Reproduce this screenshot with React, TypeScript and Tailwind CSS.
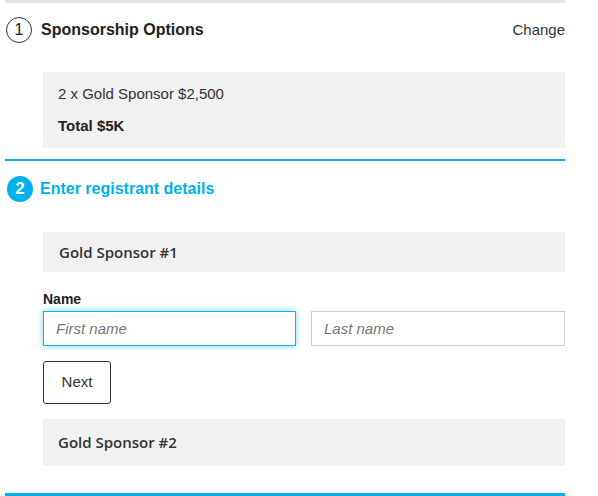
export default function App() {
  const sans = { fontFamily: '"Liberation Sans", Arial, sans-serif' };
  const open = { fontFamily: '"Open Sans", "Noto Sans", sans-serif' };

  return (
    <div className="min-h-screen bg-white text-[#333]" style={sans}>
      <div className="ml-[5px] w-[560px]">
        {/* Step 1 */}
        <section className="border-t-[3px] border-[#e4e4e4]">
          <div className="flex h-[54px] items-center justify-between">
            <div className="flex items-center gap-[9px]">
              <span className="ml-px flex h-[26px] w-[26px] items-center justify-center rounded-full border border-[#333] text-[16px] text-[#222]">
                1
              </span>
              <h2 className="text-[16px] font-bold text-[#222]">Sponsorship Options</h2>
            </div>
            <button className="text-[15px] text-[#333]">Change</button>
          </div>
          <div className="ml-[38px] mt-[15px] flex h-[76px] flex-col justify-center gap-[10px] bg-[#f1f1f1] px-[15px] text-[15px]">
            <p className="text-[#333]">2 x Gold Sponsor $2,500</p>
            <p className="font-bold text-[#222]">Total $5K</p>
          </div>
        </section>

        {/* Step 2 */}
        <section className="mt-[11px] border-t-2 border-[#00b1eb]">
          <div className="flex h-[56px] items-center gap-[7px]">
            <span className="ml-[2px] flex h-[26px] w-[26px] items-center justify-center rounded-full bg-[#00b1eb] text-[17px] font-bold text-white">
              2
            </span>
            <h2 className="text-[16px] font-bold text-[#00b1eb]">Enter registrant details</h2>
          </div>

          <div className="ml-[38px]">
            <div
              className="mt-[15px] flex h-[40px] items-center bg-[#f1f1f1] px-[16px] text-[15px] font-semibold text-[#333]"
              style={open}
            >
              Gold Sponsor #1
            </div>

            <label className="mt-[17px] mb-[5px] block h-[17px] text-[14px] font-bold text-[#222]">Name</label>
            <div className="flex gap-[15px]">
              <input
                autoFocus
                placeholder="First name"
                className="h-[35px] w-[253px] border border-[#1aaee8] px-[12px] text-[15px] italic text-[#333] shadow-[0_0_6px_rgba(0,177,235,0.55)] outline-none placeholder:text-[#777]"
              />
              <input
                placeholder="Last name"
                className="h-[35px] w-[254px] border border-[#cccccc] px-[12px] text-[15px] italic text-[#333] outline-none placeholder:text-[#777]"
              />
            </div>

            <button className="mt-[15px] h-[43px] w-[68px] rounded-[3px] border border-[#333] text-[15px] text-[#333]">
              Next
            </button>

            <div
              className="mt-[15px] flex h-[47px] items-center bg-[#f1f1f1] px-[15px] text-[15px] font-semibold text-[#333]"
              style={open}
            >
              Gold Sponsor #2
            </div>
          </div>
        </section>

        <div className="mt-[27px] border-t-[3px] border-[#00b1eb]" />
      </div>
    </div>
  );
}
